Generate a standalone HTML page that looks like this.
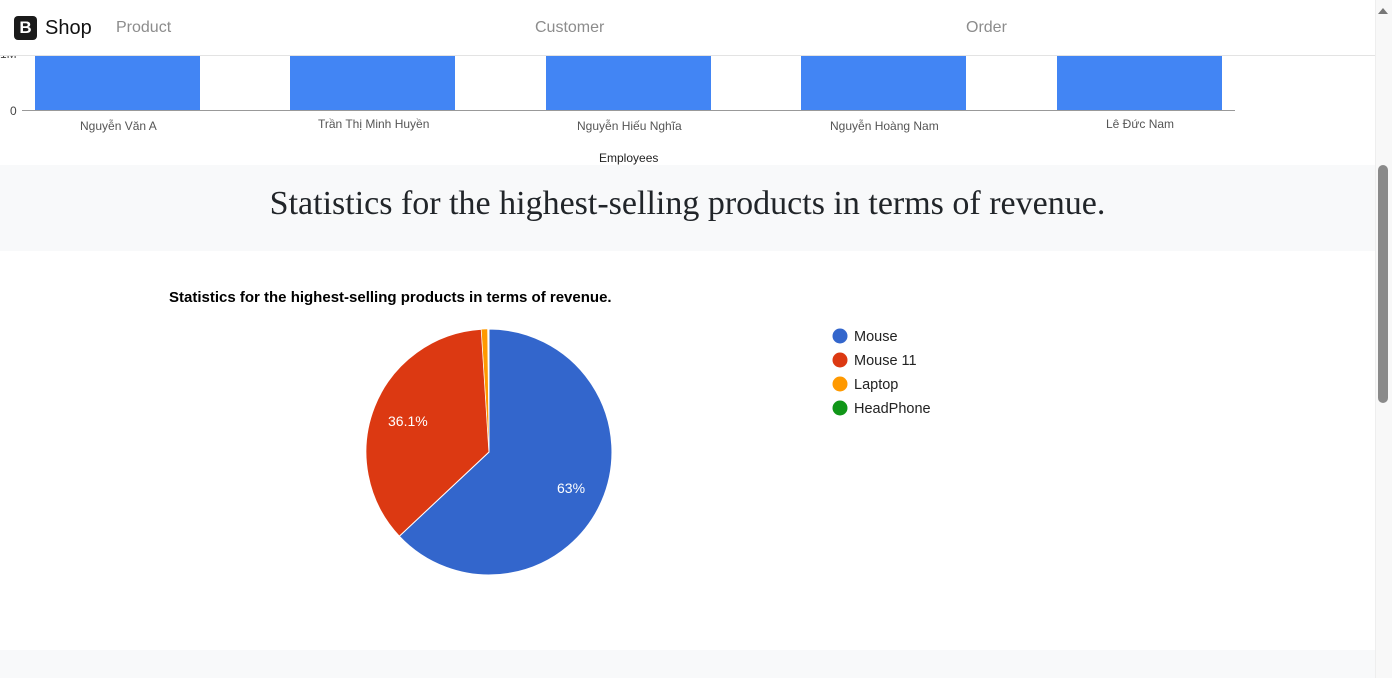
<!DOCTYPE html>
<html><head><meta charset="utf-8"><style>
*{margin:0;padding:0;box-sizing:border-box}
body{width:1392px;height:678px;overflow:hidden;background:#fff;font-family:"Liberation Sans",sans-serif;position:relative}
.abs{position:absolute}
</style></head><body>
<div class="abs" style="left:0;top:0;width:1375px;height:678px">
  <div class="abs" style="left:35px;top:56px;width:165px;height:54px;background:#4285f4"></div>
  <div class="abs" style="left:290px;top:56px;width:165px;height:54px;background:#4285f4"></div>
  <div class="abs" style="left:546px;top:56px;width:165px;height:54px;background:#4285f4"></div>
  <div class="abs" style="left:801px;top:56px;width:165px;height:54px;background:#4285f4"></div>
  <div class="abs" style="left:1057px;top:56px;width:165px;height:54px;background:#4285f4"></div>
  <div class="abs" style="left:22px;top:110px;width:1213px;height:1px;background:#999"></div>
  <div class="abs" style="left:10px;top:104px;font-size:12px;color:#444">0</div>
  <div class="abs" style="left:0;top:47px;font-size:12px;color:#444">1M</div>
  <div class="abs" style="left:80px;top:119px;font-size:12px;color:#555">Nguyễn Văn A</div>
  <div class="abs" style="left:318px;top:117px;font-size:12px;color:#555">Trần Thị Minh Huyền</div>
  <div class="abs" style="left:577px;top:119px;font-size:12px;color:#555">Nguyễn Hiếu Nghĩa</div>
  <div class="abs" style="left:830px;top:119px;font-size:12px;color:#555">Nguyễn Hoàng Nam</div>
  <div class="abs" style="left:1106px;top:117px;font-size:12px;color:#555">Lê Đức Nam</div>
  <div class="abs" style="left:599px;top:151px;font-size:12px;color:#222">Employees</div>
  <div class="abs" style="left:0;top:165px;width:1375px;height:86px;background:#f8f9fa"></div>
  <div class="abs" style="left:0;top:185px;width:1375px;text-align:center;font-family:'Liberation Serif',serif;font-size:34px;color:#212529">Statistics for the highest-selling products in terms of revenue.</div>
  <div class="abs" style="left:169px;top:289px;font-size:15px;font-weight:bold;color:#000">Statistics for the highest-selling products in terms of revenue.</div>
  <svg class="abs" style="left:0;top:0" width="1375" height="678">
    <path d="M489 452 L489 329 A123 123 0 1 1 399.3 536.2 Z" fill="#3366cc" stroke="#fff" stroke-width="1"/>
    <path d="M489 452 L399.3 536.2 A123 123 0 0 1 481.3 329.2 Z" fill="#dc3912" stroke="#fff" stroke-width="1"/>
    <path d="M489 452 L481.3 329.2 A123 123 0 0 1 487.5 329 Z" fill="#ff9900" stroke="#fff" stroke-width="0.5"/>
    <text x="388" y="426" font-size="14" fill="#fff" font-family="Liberation Sans">36.1%</text>
    <text x="557" y="493" font-size="14" fill="#fff" font-family="Liberation Sans">63%</text>
    <circle cx="840" cy="336" r="7.5" fill="#3366cc"/>
    <circle cx="840" cy="360" r="7.5" fill="#dc3912"/>
    <circle cx="840" cy="384" r="7.5" fill="#ff9900"/>
    <circle cx="840" cy="408" r="7.5" fill="#109618"/>
    <g font-size="14.5" fill="#222" font-family="Liberation Sans">
      <text x="854" y="341">Mouse</text>
      <text x="854" y="365">Mouse 11</text>
      <text x="854" y="389">Laptop</text>
      <text x="854" y="413">HeadPhone</text>
    </g>
  </svg>
  <div class="abs" style="left:0;top:650px;width:1375px;height:28px;background:#f8f9fa"></div>
</div>
<div class="abs" style="left:0;top:0;width:1375px;height:56px;background:#fff;border-bottom:1px solid #e3e3e3">
  <div class="abs" style="left:14px;top:16px;width:23px;height:24px;background:#1a1a1a;border-radius:4px;color:#fff;font-weight:bold;font-size:17px;text-align:center;line-height:24px">B</div>
  <div class="abs" style="left:45px;top:17px;font-size:20px;color:#111">Shop</div>
  <div class="abs" style="left:116px;top:19px;font-size:16px;color:#8c8c8c">Product</div>
  <div class="abs" style="left:535px;top:19px;font-size:16px;color:#8c8c8c">Customer</div>
  <div class="abs" style="left:966px;top:19px;font-size:16px;color:#8c8c8c">Order</div>
</div>
<div class="abs" style="left:1375px;top:0;width:17px;height:678px;background:#f8f8f8;border-left:1px solid #eee"></div>
<div class="abs" style="left:1378px;top:8px;width:0;height:0;border-left:5px solid transparent;border-right:5px solid transparent;border-bottom:6px solid #777"></div>
<div class="abs" style="left:1378px;top:165px;width:10px;height:238px;background:#8a8a8a;border-radius:5px"></div>
</body></html>
